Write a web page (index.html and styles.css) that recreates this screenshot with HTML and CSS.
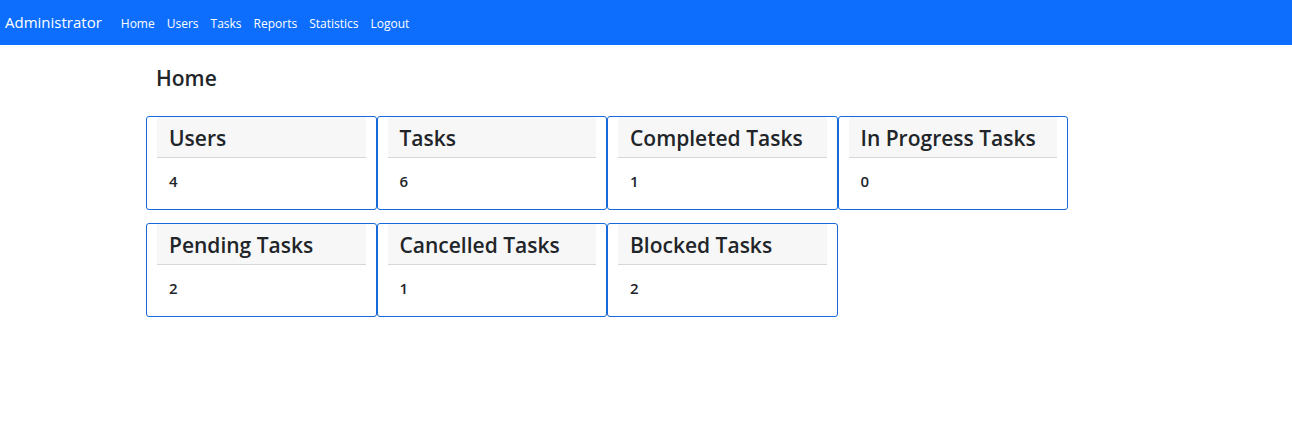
FILE: index.html
```html
<!DOCTYPE html>
<html lang="en">
<head>
<meta charset="utf-8">
<meta name="viewport" content="width=device-width, initial-scale=1">
<title>Administrator</title>
<link rel="stylesheet" href="styles.css">
</head>
<body>
<nav class="navbar">
  <a class="brand" href="#">Administrator</a>
  <ul class="nav">
    <li><a href="#">Home</a></li>
    <li><a href="#">Users</a></li>
    <li><a href="#">Tasks</a></li>
    <li><a href="#">Reports</a></li>
    <li><a href="#">Statistics</a></li>
    <li><a href="#">Logout</a></li>
  </ul>
</nav>
<main class="container">
  <h1 class="title">Home</h1>
  <div class="cards">
    <section class="card"><h2 class="card-header">Users</h2><p class="card-body">4</p></section>
    <section class="card"><h2 class="card-header">Tasks</h2><p class="card-body">6</p></section>
    <section class="card"><h2 class="card-header">Completed Tasks</h2><p class="card-body">1</p></section>
    <section class="card"><h2 class="card-header">In Progress Tasks</h2><p class="card-body">0</p></section>
    <section class="card"><h2 class="card-header">Pending Tasks</h2><p class="card-body">2</p></section>
    <section class="card"><h2 class="card-header">Cancelled Tasks</h2><p class="card-body">1</p></section>
    <section class="card"><h2 class="card-header">Blocked Tasks</h2><p class="card-body">2</p></section>
  </div>
</main>
</body>
</html>
```
FILE: styles.css
```css
* { box-sizing: border-box; }
body {
  margin: 0;
  background: #fff;
  color: #212529;
  font-family: "Segoe UI", "Open Sans", "Noto Sans", sans-serif;
  font-size: 15px;
}
.navbar {
  display: flex;
  align-items: flex-start;
  gap: 19px;
  padding: 11px 5px 10px;
  background: #0d6efd;
  line-height: 22px;
}
.navbar a { color: #fff; text-decoration: none; }
.brand { font-size: 15px; }
.nav {
  display: flex;
  gap: 12px;
  margin: 0;
  padding: 2px 0 0;
  list-style: none;
  font-size: 12px;
}
.container {
  max-width: 1000px;
  margin: 0 auto;
  padding-top: 18px;
}
.title {
  margin: 0 10px 23px;
  font-size: 21px;
  font-weight: 600;
  line-height: 30px;
}
.cards {
  display: grid;
  grid-template-columns: repeat(4, 1fr);
  row-gap: 13px;
  max-width: 922px;
}
.card {
  padding: 0 10px;
  border: 1px solid #1769d8;
  border-radius: 3px;
}
.card-header {
  margin: 0;
  padding: 7px 12px 5px;
  border-bottom: 1px solid #d7d7d7;
  background: #f7f7f7;
  font-size: 21px;
  font-weight: 600;
  line-height: 28px;
}
.card-body {
  margin: 0;
  padding: 13px 12px 17px;
  font-weight: 600;
  line-height: 21px;
}
```
